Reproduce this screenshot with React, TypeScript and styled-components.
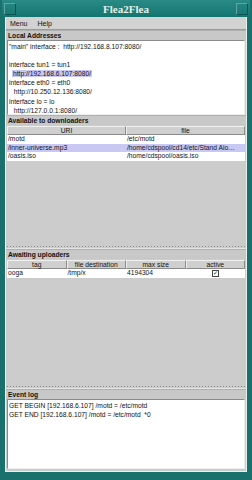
import React from "react";
import styled, { createGlobalStyle } from "styled-components";

const Global = createGlobalStyle`
  html, body { margin: 0; padding: 0; background: #166f6b; }
  #root { width: 252px; height: 480px; }
`;

const Window = styled.div`
  width: 252px;
  height: 480px;
  box-sizing: border-box;
  background: #1a706c;
  display: flex;
  flex-direction: column;
  padding: 0 5px 8px 5px;
  font-family: "Liberation Sans", Arial, sans-serif;
  font-size: 6.7px;
  color: #111;
`;

const TitleBar = styled.div`
  height: 17px;
  flex: none;
  display: flex;
  align-items: center;
  justify-content: space-between;
  margin: 0 -3px;
  background: linear-gradient(#2a8a86, #137470);
`;

const TitleBox = styled.div`
  width: 10px;
  height: 10px;
  border: 1px solid #5fa6a2;
  border-right-color: #0d5552;
  border-bottom-color: #0d5552;
  margin: 0 2px;
`;

const Title = styled.div`
  font-family: "Liberation Serif", "Times New Roman", serif;
  font-weight: bold;
  font-size: 11px;
  color: #e6f2e8;
`;

const Client = styled.div`
  flex: 1;
  display: flex;
  flex-direction: column;
  background: #cccccc;
  border-left: 1px solid #e8f0ee;
  border-right: 1px solid #e8f0ee;
  border-bottom: 1px solid #e8f0ee;
  min-height: 0;
`;

const MenuBar = styled.div`
  height: 12px;
  flex: none;
  display: flex;
  align-items: center;
  gap: 10px;
  padding-left: 4px;
  font-size: 7px;
  background: #d2d2d2;
  border-bottom: 1px solid #9a9a9a;
`;

const Pane = styled.div<{ $h?: number }>`
  display: flex;
  flex-direction: column;
  ${(p) => (p.$h ? `height: ${p.$h}px; flex: none;` : `flex: 1; min-height: 0;`)}
  padding-bottom: 2px;
  box-sizing: border-box;
`;

const SectionHeader = styled.div`
  height: 9px;
  flex: none;
  display: flex;
  align-items: center;
  padding-left: 2px;
  font-weight: bold;
  border-top: 1px solid #b0b0b0;
  background: #c8c8c8;
`;

const TextArea = styled.div<{ $h?: number }>`
  ${(p) => (p.$h ? `height: ${p.$h}px; flex: none;` : `flex: 1;`)}
  margin: 0 1px;
  background: #ffffff;
  border-top: 1px solid #8a8a8a;
  border-left: 1px solid #8a8a8a;
  border-right: 1px solid #eeeeee;
  border-bottom: 1px solid #eeeeee;
  box-sizing: border-box;
  padding: 1px 1px;
  line-height: 9.1px;
  white-space: pre;
  overflow: hidden;
`;

const Line = styled.div<{ $indent?: boolean }>`
  height: 9.1px;
  padding-left: ${(p) => (p.$indent ? 3 : 0)}px;
`;

const Mark = styled.span`
  background: #c8c8f2;
  padding: 0 1px;
`;

const Table = styled.div<{ $cols: number }>`
  flex: none;
  margin: 1px 1px 0 1px;
  display: grid;
  grid-template-columns: repeat(${(p) => p.$cols}, 1fr);
`;

const HeadCell = styled.div`
  height: 9px;
  box-sizing: border-box;
  display: flex;
  align-items: center;
  justify-content: center;
  background: #cfcfcf;
  border-top: 1px solid #f0f0f0;
  border-left: 1px solid #f0f0f0;
  border-right: 1px solid #8a8a8a;
  border-bottom: 1px solid #8a8a8a;
`;

const Cell = styled.div<{ $sel?: boolean; $center?: boolean }>`
  height: 8.5px;
  line-height: 8.5px;
  padding-left: 1px;
  background: ${(p) => (p.$sel ? "#c8c8f2" : "#ffffff")};
  white-space: nowrap;
  overflow: hidden;
  text-align: ${(p) => (p.$center ? "center" : "left")};
`;

const Check = styled.span`
  display: inline-block;
  width: 5px;
  height: 5px;
  border: 1px solid #444;
  vertical-align: middle;
  font-size: 6px;
  line-height: 5px;
  text-align: center;
`;

const Splitter = styled.div`
  height: 5px;
  flex: none;
  box-sizing: border-box;
  background-image: radial-gradient(circle, #888 0.6px, transparent 0.7px);
  background-size: 3px 3px;
  background-position: 0 1px;
  background-repeat: repeat-x;
  border-bottom: 1px solid #e4e4e4;
`;

export default function App() {
  return (
    <>
      <Global />
      <Window>
        <TitleBar>
          <TitleBox />
          <Title>Flea2Flea</Title>
          <TitleBox />
        </TitleBar>
        <Client>
          <MenuBar>
            <span>Menu</span>
            <span>Help</span>
          </MenuBar>
          <Pane $h={85}>
            <SectionHeader>Local Addresses</SectionHeader>
            <TextArea $h={75}>
              <Line>"main" interface :  http://192.168.8.107:8080/</Line>
              <Line> </Line>
              <Line>interface tun1 = tun1</Line>
              <Line $indent>
                <Mark>http://192.168.6.107:8080/</Mark>
              </Line>
              <Line>interface eth0 = eth0</Line>
              <Line $indent> http://10.250.12.136:8080/</Line>
              <Line>interface lo = lo</Line>
              <Line $indent> http://127.0.0.1:8080/</Line>
            </TextArea>
          </Pane>
          <Pane $h={129}>
            <SectionHeader>Available to downloaders</SectionHeader>
            <Table $cols={2}>
              <HeadCell>URI</HeadCell>
              <HeadCell>file</HeadCell>
              <Cell>/motd</Cell>
              <Cell>/etc/motd</Cell>
              <Cell $sel>/inner-universe.mp3</Cell>
              <Cell $sel>/home/cdspool/cd14/etc/Stand Alo…</Cell>
              <Cell>/oasis.iso</Cell>
              <Cell>/home/cdspool/oasis.iso</Cell>
            </Table>
          </Pane>
          <Splitter />
          <Pane $h={135}>
            <SectionHeader>Awaiting uploaders</SectionHeader>
            <Table $cols={4}>
              <HeadCell>tag</HeadCell>
              <HeadCell>file destination</HeadCell>
              <HeadCell>max size</HeadCell>
              <HeadCell>active</HeadCell>
              <Cell>ooga</Cell>
              <Cell>/tmp/x</Cell>
              <Cell>4194304</Cell>
              <Cell $center>
                <Check>✓</Check>
              </Cell>
            </Table>
          </Pane>
          <Splitter />
          <Pane>
            <SectionHeader>Event log</SectionHeader>
            <TextArea>
              <Line>GET BEGIN [192.168.6.107] /motd = /etc/motd</Line>
              <Line>GET END [192.168.6.107] /motd = /etc/motd  *0</Line>
            </TextArea>
          </Pane>
        </Client>
      </Window>
    </>
  );
}
